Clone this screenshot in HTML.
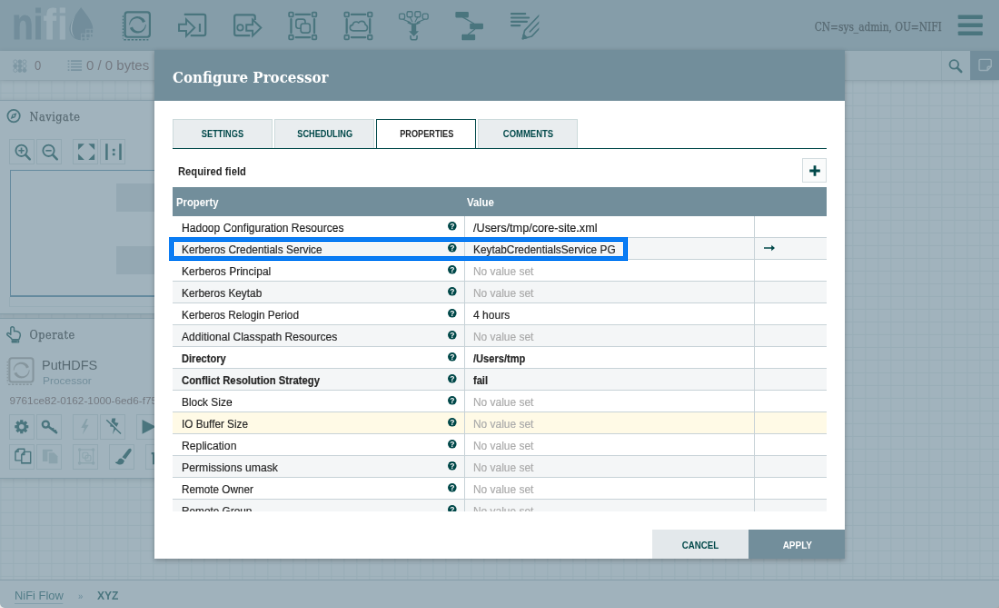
<!DOCTYPE html>
<html lang="en">
<head>
<meta charset="utf-8">
<title>NiFi Flow - Configure Processor</title>
<style>
html,body{margin:0;padding:0;}
body{width:999px;height:608px;overflow:hidden;background:#a1b4bd;font-family:"Liberation Sans",Arial,sans-serif;}
#stage{position:absolute;left:0;top:0;width:1100px;height:670px;transform:scale(0.9084);transform-origin:0 0;overflow:hidden;background:#f9fafb;will-change:transform;}
.abs{position:absolute;}
.slab{font-family:"DejaVu Serif Condensed","DejaVu Serif","Liberation Serif",serif;}
/* canvas */
#canvas{left:0;top:88px;width:1100px;height:550px;background-color:#f9fafb;
 background-image:linear-gradient(to right,#dfe6e9 1px,transparent 1px),linear-gradient(to bottom,#dfe6e9 1px,transparent 1px);
 background-size:14px 14px;background-position:0.4px -0.1px;}
/* header */
#header{left:0;top:0;width:1100px;height:56px;background:#aabbc3;}
#status{left:0;top:56px;width:1100px;height:32px;background:#e3e8eb;box-shadow:0 1px 6px rgba(0,0,0,0.25);color:#775351;font-size:15px;}
#status .t{position:absolute;top:7px;line-height:18px;white-space:nowrap;}
#search{left:1036px;top:0;width:32px;height:32px;border-left:1px solid #c7d2d7;box-sizing:border-box;}
#bull{left:1068px;top:0;width:32px;height:32px;background:#728e9b;}
#user{right:63.5px;top:20.5px;font-size:12.1px;line-height:18px;color:#262626;white-space:nowrap;transform:scaleX(.974);transform-origin:100% 50%;-webkit-text-stroke:0.25px #262626;}
/* panels */
.panel{background:rgba(249,250,251,0.97);border:1px solid #aabbc3;border-left:none;box-shadow:0 1px 6px rgba(0,0,0,0.25);box-sizing:border-box;}
.ptitle{position:absolute;margin-top:1px;-webkit-text-stroke:0.25px #262626;left:32.6px;font-size:12.5px;letter-spacing:0.55px;color:#262626;line-height:18px;}
.btn{position:absolute;width:28px;height:28px;box-sizing:border-box;border:1px solid #cfd9dd;background:#f9fafb;}
.btn svg{position:absolute;left:0;top:0;width:26px;height:26px;}
.btn.dis svg{opacity:.3;}
/* footer */
#crumbs{left:0;top:638px;width:1100px;height:32px;background:#f5f7f9;border-top:1px solid #aabbc3;box-sizing:border-box;font-size:14px;color:#598599;}
#crumbs span{position:absolute;top:8px;line-height:18px;white-space:nowrap;}
/* overlay */
#fade{left:0;top:0;width:1100px;height:670px;background:#728e9b;opacity:.65;}
/* dialog */
#dlg{left:170.4px;top:55.3px;width:760px;height:559.5px;background:#fff;box-shadow:0 2px 5px rgba(0,0,0,0.26);}
#dhead{left:0;top:0;width:760px;height:55.5px;background:#728e9b;}
#dtitle{left:19.5px;top:17.6px;font-size:17.4px;font-weight:bold;color:#fff;line-height:24px;white-space:nowrap;transform:scaleX(.964);transform-origin:0 50%;}
.tab{position:absolute;top:75.7px;height:32px;width:110px;box-sizing:border-box;border:1px solid #ccdadb;border-bottom:none;background:#e9edef;color:#004849;font-size:10.8px;font-weight:bold;text-align:center;line-height:30.2px;}
.tab span,.dbtn span{display:inline-block;transform-origin:50% 50%;}
.tab.sel{background:#fff;border-color:#004849;color:#262626;height:33px;}
#tabline{left:20px;top:107.7px;width:720px;height:1.4px;background:#004849;}
#req{left:25.5px;top:125.8px;font-size:12.3px;font-weight:bold;color:#262626;line-height:16px;transform:scaleX(.913);transform-origin:0 50%;white-space:nowrap;}
#plus{left:712.5px;top:118.7px;width:27.5px;height:27.5px;box-sizing:border-box;border:1px solid #d3dcdf;background:#fafbfb;}
#grid{left:20px;top:150.6px;width:720px;height:357px;overflow:hidden;}
#ghead{left:0;top:0;width:720px;height:32px;background:#728e9b;color:#fff;font-weight:bold;font-size:12.5px;line-height:32px;}
.row{position:absolute;left:0;width:720px;height:24px;box-sizing:border-box;border-bottom:1px solid #c7d2d7;background:#fff;font-size:12.5px;line-height:24px;color:#262626;white-space:nowrap;}
.row span{-webkit-text-stroke:0.18px currentColor;}
.row.alt{background:#f4f6f7;}
.row.hov{background:#fffae6;}
.row.b{font-weight:bold;}
.row .p{position:absolute;left:9.6px;top:0.8px;transform-origin:0 50%;}
.row .v{position:absolute;left:330.5px;top:0.8px;transform-origin:0 50%;}
.row .nv{color:#aaaaaa;font-weight:normal;}
.row .c1{position:absolute;left:320.4px;top:0;width:1px;height:24px;background:#c7d2d7;}
.row .c2{position:absolute;left:639.8px;top:0;width:1px;height:24px;background:#c7d2d7;}
.row .q{position:absolute;left:302.8px;top:6.5px;width:9.6px;height:9.6px;}
.dbtn{position:absolute;top:528px;height:31.5px;width:106px;font-size:11px;font-weight:bold;text-align:center;line-height:34px;}
#annot{left:169px;top:237px;width:459px;height:24px;box-sizing:border-box;border:5px solid #0b7cf3;}
</style>
</head>
<body>
<div id="stage">
  <div id="canvas" class="abs"></div>
  <div id="header" class="abs">
    <div id="user" class="abs slab">CN=sys_admin, OU=NIFI</div>
  </div>
  <div id="status" class="abs">
    <span class="t" style="left:38px;transform:scaleX(.87);transform-origin:0 50%">0</span>
    <span class="t" style="left:95px">0 / 0 bytes</span>
    <div id="search" class="abs"></div>
    <div id="bull" class="abs"></div>
  </div>
  <div id="nav" class="abs panel" style="left:0;top:110px;width:330px;height:235.5px;">
    <div class="ptitle slab" style="top:8px">Navigate</div>
    <div class="btn" style="left:10px;top:42px"></div><div class="btn" style="left:40px;top:42px"></div><div class="btn" style="left:80px;top:42px"></div><div class="btn" style="left:110px;top:42px"></div>
    <div class="abs" style="left:11px;top:76px;width:300px;height:140px;border:1.3px solid #4b83a3;border-bottom-width:2px;box-sizing:border-box;background:#f9fafb;">
      <div class="abs" style="left:116px;top:13.7px;width:180px;height:31.3px;background:#d3dbe0;"></div>
      <div class="abs" style="left:116px;top:82.8px;width:180px;height:31.3px;background:#d3dbe0;"></div>
    </div>
    <div class="abs" style="left:10px;top:216px;width:302px;height:11px;border:1px solid #dde4e7;border-top:none;box-sizing:border-box;"></div>
  </div>
  <div id="op" class="abs panel" style="left:0;top:350px;width:330px;height:177px;">
    <div class="ptitle slab" style="top:8px">Operate</div>
    <div class="abs" style="left:46.4px;top:41px;font-size:15.2px;line-height:20px;color:#262626;white-space:nowrap;transform:scaleX(.955);transform-origin:0 50%">PutHDFS</div>
    <div class="abs" style="left:46.6px;top:59.8px;font-size:11.4px;line-height:16px;color:#728e9b;white-space:nowrap;transform:scaleX(1.05);transform-origin:0 50%">Processor</div>
    <div class="abs" style="left:10.4px;top:81.9px;font-size:11.8px;line-height:16px;color:#775351;white-space:nowrap;">9761ce82-0162-1000-6ed6-f75a30e1c9b4</div>
    <div class="btn" style="left:10px;top:105px"></div><div class="btn" style="left:40px;top:105px"></div><div class="btn" style="left:80px;top:105px"></div><div class="btn" style="left:110px;top:105px"></div><div class="btn" style="left:150px;top:105px"></div>
    <div class="btn" style="left:10px;top:138px"></div><div class="btn" style="left:40px;top:138px"></div><div class="btn" style="left:80px;top:138px"></div><div class="btn" style="left:120px;top:138px"></div><div class="btn" style="left:160px;top:138px"></div>
  </div>
  <div id="crumbs" class="abs">
    <span style="left:15.8px;font-size:12.6px;transform:scaleX(1.025);transform-origin:0 50%;border-bottom:1px solid #a3bcc5;line-height:15.9px;top:9.5px;color:#175c62">NiFi Flow</span>
    <span style="left:85.8px;font-size:11px;transform:scaleX(.864);transform-origin:0 50%;top:8px">&raquo;</span>
    <span style="left:106.8px;font-size:12.6px;font-weight:bold;color:#004849;transform:scaleX(.957);transform-origin:0 50%;top:8.1px">XYZ</span>
  </div>
  <!--ICONS-->
<svg class="abs" style="left:0;top:0;width:1100px;height:670px" viewBox="0 0 999.2 608.6">
<g font-family="Liberation Sans, sans-serif" font-weight="bold" font-size="40" stroke-width="0.76" stroke-linejoin="miter">
<text transform="translate(12.07,39.5) scale(0.87,1.08)" fill="#728e9b" stroke="#728e9b">n</text>
<text transform="translate(33.43,39.5) scale(0.87,1.05)" fill="#728e9b" stroke="#728e9b">i</text>
<text transform="translate(43.7,39.5) scale(0.93,1.05)" fill="#e3e9ec" stroke="#e3e9ec">f</text>
<text transform="translate(57.73,39.5) scale(0.87,1.05)" fill="#e3e9ec" stroke="#e3e9ec">i</text>
</g>
<path d="M81,7.3C78,11.5 69.4,21.5 69.4,28.6C69.4,35.2 74.5,40.2 81.2,40.2C87.9,40.2 93,35.2 93,28.6C93,21.5 84,11.5 81,7.3Z" fill="#728e9b"/>
<path d="M75.6,14.5C72.5,19 70.6,24 70.6,28.6C70.6,32.6 72.3,35.6 74.8,37.6C72.9,35.2 71.9,32.2 71.9,28.6C71.9,24 73.2,19.6 75.6,14.5Z" fill="#dfe6ea"/>
<path d="M85.6,28.8H94V41H80.8V33.4H85.6Z" fill="#aabbc3"/>
<rect x="86.4" y="29.6" width="3.2" height="3.2" fill="#728e9b"/>
<rect x="90.6" y="29.6" width="2.2" height="3.2" fill="#728e9b"/>
<rect x="81.6" y="34.2" width="3.2" height="3.2" fill="#728e9b"/>
<rect x="86.4" y="34.2" width="3.2" height="3.2" fill="#728e9b"/>
<rect x="90.8" y="34.6" width="1.6" height="2" fill="#728e9b"/>
<rect x="82.2" y="38.4" width="2.6" height="2" fill="#728e9b"/>
<rect x="86.8" y="38.4" width="1.8" height="1.6" fill="#728e9b"/>
<g transform="translate(137.4,24.6) scale(1.0)" fill="none" stroke="#004849"><rect x="-12.4" y="-12.4" width="24.8" height="24.8" rx="2.6" stroke-width="2"/><path d="M-13.6,15.1H11" stroke-width="1.3" stroke-dasharray="2.3 1.5"/><path d="M-14.4,-9V14" stroke-width="1.1" stroke-dasharray="1.6 1.6"/><path d="M-8.19,0.49 L-8.17,-0.48 L-8.04,-1.45 L-7.79,-2.40 L-7.43,-3.31 L-6.97,-4.17 L-6.42,-4.97 L-5.77,-5.71 L-5.05,-6.36 L-4.25,-6.92 L-3.39,-7.39 L-2.49,-7.76 L-1.55,-8.02 L-0.58,-8.16 L0.40,-8.20 L1.37,-8.12 L2.33,-7.93 L3.26,-7.62 L4.14,-7.22 L4.98,-6.71 L5.75,-6.11 L6.44,-5.42 L7.05,-4.66 L7.57,-3.83 L7.99,-2.95 L5.11,-1.79 L4.94,-2.39 L4.69,-2.98 L4.36,-3.55 L3.96,-4.08 L3.50,-4.57 L2.97,-5.01 L2.38,-5.39 L1.74,-5.70 L1.06,-5.94 L0.35,-6.10 L-0.39,-6.17 L-1.15,-6.16 L-1.91,-6.05 L-2.67,-5.86 L-3.40,-5.57 L-4.11,-5.19 L-4.78,-4.72 L-5.39,-4.17 L-5.95,-3.54 L-6.43,-2.85 L-6.84,-2.09 L-7.15,-1.27 L-7.37,-0.42 L-7.50,0.47Z" fill="#004849" stroke="none"/><path d="M8.59,-0.09 L8.57,0.88 L8.44,1.85 L8.19,2.80 L7.83,3.71 L7.37,4.57 L6.82,5.37 L6.17,6.11 L5.45,6.76 L4.65,7.32 L3.79,7.79 L2.89,8.16 L1.95,8.42 L0.98,8.56 L0.00,8.60 L-0.97,8.52 L-1.93,8.33 L-2.86,8.02 L-3.74,7.62 L-4.58,7.11 L-5.35,6.51 L-6.04,5.82 L-6.65,5.06 L-7.17,4.23 L-7.59,3.35 L-4.71,2.19 L-4.54,2.79 L-4.29,3.38 L-3.96,3.95 L-3.56,4.48 L-3.10,4.97 L-2.57,5.41 L-1.98,5.79 L-1.34,6.10 L-0.66,6.34 L0.05,6.50 L0.79,6.57 L1.55,6.56 L2.31,6.45 L3.07,6.26 L3.80,5.97 L4.51,5.59 L5.18,5.12 L5.79,4.57 L6.35,3.94 L6.83,3.25 L7.24,2.49 L7.55,1.67 L7.77,0.82 L7.90,-0.07Z" fill="#004849" stroke="none"/></g>
<g fill="none" stroke="#004849" stroke-width="2" stroke-linejoin="miter">
<path d="M184.2,14.5H203.5Q205.5,14.5 205.5,16.5V33.5Q205.5,35.5 203.5,35.5H190.5"/>
<path d="M179,24.4H186.2V19.4L194.6,27.6L186.2,36V30.8H179Z" stroke-width="1.8"/>
<path d="M199.8,23.6V31.8"/>
<path d="M255,20V16.8Q255,14.9 253,14.9H236.5Q234.5,14.9 234.5,16.9V33.5Q234.5,35.5 236.5,35.5H250"/>
<circle cx="240.2" cy="27.6" r="2.9" stroke-width="1.6"/>
<path d="M246.4,24.8H252.6V19.6L261,27.7L252.6,35.8V30.6H246.4Z" stroke-width="1.8"/>
</g>
<g transform="translate(288.2,11.6)" fill="none" stroke="#004849"><rect x="0.8" y="0.8" width="4.2" height="4.2" rx="0.8" stroke-width="1.6"/><rect x="24" y="0.8" width="4.2" height="4.2" rx="0.8" stroke-width="1.6"/><rect x="0.8" y="23.6" width="4.2" height="4.2" rx="0.8" stroke-width="1.6"/><rect x="24" y="23.6" width="4.2" height="4.2" rx="0.8" stroke-width="1.6"/><path d="M7.6,2.9H21.6M7.6,25.7H21.6M2.9,7.6V21.2M26.1,7.6V21.2" stroke-width="2.1" stroke-linecap="round"/>
<rect x="7.8" y="7.6" width="9.2" height="9.2" rx="2.4" stroke-width="1.5"/>
<rect x="12.6" y="12" width="9.2" height="9.2" rx="2.4" stroke-width="1.5" fill="#aabbc3"/>
</g>
<g transform="translate(343.8,11.6)" fill="none" stroke="#004849"><rect x="0.8" y="0.8" width="4.2" height="4.2" rx="0.8" stroke-width="1.6"/><rect x="24" y="0.8" width="4.2" height="4.2" rx="0.8" stroke-width="1.6"/><rect x="0.8" y="23.6" width="4.2" height="4.2" rx="0.8" stroke-width="1.6"/><rect x="24" y="23.6" width="4.2" height="4.2" rx="0.8" stroke-width="1.6"/><path d="M7.6,2.9H21.6M7.6,25.7H21.6M2.9,7.6V21.2M26.1,7.6V21.2" stroke-width="2.1" stroke-linecap="round"/>
<path d="M9.4,19.2C7.2,19.2 6.2,17.7 6.2,16.2C6.2,14.6 7.4,13.4 9,13.3C9.2,11.3 10.8,10.2 12.4,10.2C13.4,10.2 14.2,10.6 14.8,11.2C15.4,10.2 16.6,9.6 17.8,9.6C20,9.6 21.4,11.2 21.5,13.2C22.8,13.6 23.6,14.8 23.6,16.1C23.6,17.8 22.4,19.2 20.6,19.2Z" stroke-width="1.5" stroke-linejoin="round"/>
</g>
<g fill="none" stroke="#004849" stroke-width="1.2">
<rect x="399.3" y="13.8" width="5.4" height="5.4" rx="1.4"/>
<rect x="407" y="11.6" width="5.4" height="5.4" rx="1.4"/>
<rect x="415" y="11.6" width="5.4" height="5.4" rx="1.4"/>
<rect x="422.6" y="13.8" width="5.4" height="5.4" rx="1.4"/>
<path d="M403,19.4L410.6,22.6M410,17.2L412.4,22M417.6,17.2L415,22M424.6,19.4L416.8,22.6" stroke-width="1"/>
<path d="M407.6,22.2Q413.8,26 420,22.2" stroke-width="1.5"/>
<path d="M411.4,24.6H416.2V31H418.8L413.8,36.4L408.8,31H411.4Z" fill="#004849" stroke="none"/>
<path d="M410.6,35.4V37.6Q410.6,39.8 412.8,39.8H414.8Q417,39.8 417,37.6V35.4" stroke-width="1.4"/>
</g>
<g fill="#004849" stroke="#004849" stroke-width="1.2">
<rect x="455.4" y="11.8" width="13.2" height="5.8" rx="1" stroke="none"/>
<rect x="469.8" y="23.4" width="13.4" height="5.8" rx="1" stroke="none"/>
<rect x="461.8" y="34.4" width="13.4" height="5.8" rx="1" stroke="none"/>
<path d="M463,17.4L474,23.6M475,29L468,34.6"/>
</g>
<g fill="none" stroke="#004849" stroke-width="2" stroke-linecap="round">
<path d="M511.4,13.8H525.2M511.4,17.7H528.8M511.4,21.6H526.8M511.4,25.5H519.8"/>
</g>
<defs><clipPath id="cpen"><rect x="520" y="14" width="19" height="27"/></clipPath></defs>
<g clip-path="url(#cpen)" fill="none" stroke="#004849" stroke-width="1.5" stroke-linejoin="round">
<path d="M522.6,38.9L524.6,30.6L541,13.4M522.6,38.9L531.6,36.4L541,26.6M529.4,32.2L541,20.2"/>
<path d="M522.6,38.9L523.7,34.6L526.9,37.7Z" fill="#004849"/>
</g>
<g fill="#004849"><rect x="958" y="14.9" width="24.6" height="4.1" rx="0.8"/><rect x="958" y="23.1" width="24.6" height="4.1" rx="0.8"/><rect x="958" y="31.3" width="24.6" height="4.1" rx="0.8"/></g>
<g stroke="#728e9b" stroke-width="0.8" opacity="0.7">
<circle cx="15.3" cy="61.7" r="1.85" fill="none"/>
<circle cx="19.9" cy="61.7" r="1.85" fill="#728e9b"/>
<circle cx="24.5" cy="61.7" r="1.85" fill="none"/>
<circle cx="15.3" cy="66.0" r="1.85" fill="#728e9b"/>
<circle cx="19.9" cy="66.0" r="1.85" fill="#728e9b"/>
<circle cx="24.5" cy="66.0" r="1.85" fill="none"/>
<circle cx="15.3" cy="70.3" r="1.85" fill="none"/>
<circle cx="19.9" cy="70.3" r="1.85" fill="#728e9b"/>
<circle cx="24.5" cy="70.3" r="1.85" fill="#728e9b"/>
</g>
<g stroke="#728e9b" stroke-width="1.5" opacity="0.8">
<path d="M67.8,61.0H69.4M70.8,61.0H81.8"/>
<path d="M67.8,64.0H69.4M70.8,64.0H81.8"/>
<path d="M67.8,67.0H69.4M70.8,67.0H81.8"/>
<path d="M67.8,70.0H69.4M70.8,70.0H81.8"/>
</g>
<g fill="none" stroke="#004849"><circle cx="954" cy="64.4" r="4.3" stroke-width="1.7"/><path d="M957.2,67.8L961.2,71.8" stroke-width="2.4" stroke-linecap="round"/></g>
<path d="M980.4,59.4H990Q991.2,59.4 991.2,60.6V66.6L987.4,70.4H980.4Q979.2,70.4 979.2,69.2V60.6Q979.2,59.4 980.4,59.4ZM991,66.6H988.6Q987.4,66.6 987.4,67.8V70.2" fill="none" stroke="#e3e8eb" stroke-width="1.3"/>
<g fill="none" stroke="#004849"><circle cx="13.7" cy="115.9" r="6.1" stroke-width="1.6"/><path d="M10.6,119L12.2,114.4L16.8,112.8L15.2,117.4Z" fill="#004849" stroke="none"/><circle cx="13.7" cy="115.9" r="0.9" fill="#f9fafb" stroke="none"/></g>
<g fill="none" stroke="#004849"><circle cx="21.4" cy="150.6" r="5.6" stroke-width="1.7"/><path d="M25.7,155.0L29.799999999999997,159.2" stroke-width="2.3" stroke-linecap="round"/>
<path d="M18.5,150.6H24.299999999999997M21.4,147.7V153.5" stroke-width="1.5"/></g>
<g fill="none" stroke="#004849"><circle cx="48.6" cy="150.6" r="5.6" stroke-width="1.7"/><path d="M52.9,155.0L57.0,159.2" stroke-width="2.3" stroke-linecap="round"/>
<path d="M45.7,150.6H51.5" stroke-width="1.5"/></g>
<path fill="#004849" d="M78.2,143.7h6.2l-6.2,6.2zM94.6,143.7v6.2l-6.2,-6.2zM78.2,159.9v-6.2l6.2,6.2zM94.6,159.9h-6.2l6.2,-6.2z"/>
<g fill="#004849"><rect x="105.5" y="143.7" width="2.3" height="16.2"/><rect x="119.2" y="143.7" width="2.3" height="16.2"/><rect x="112.5" y="148.8" width="2.5" height="2.4"/><rect x="112.5" y="153.1" width="2.5" height="2.4"/></g>
<g transform="translate(21.3,370.0) scale(0.96)" fill="none" stroke="#aaa3a1"><rect x="-12.4" y="-12.4" width="24.8" height="24.8" rx="2.6" stroke-width="2"/><path d="M-13.6,15.1H11" stroke-width="1.3" stroke-dasharray="2.3 1.5"/><path d="M-14.4,-9V14" stroke-width="1.1" stroke-dasharray="1.6 1.6"/><path d="M-8.19,0.49 L-8.17,-0.48 L-8.04,-1.45 L-7.79,-2.40 L-7.43,-3.31 L-6.97,-4.17 L-6.42,-4.97 L-5.77,-5.71 L-5.05,-6.36 L-4.25,-6.92 L-3.39,-7.39 L-2.49,-7.76 L-1.55,-8.02 L-0.58,-8.16 L0.40,-8.20 L1.37,-8.12 L2.33,-7.93 L3.26,-7.62 L4.14,-7.22 L4.98,-6.71 L5.75,-6.11 L6.44,-5.42 L7.05,-4.66 L7.57,-3.83 L7.99,-2.95 L5.11,-1.79 L4.94,-2.39 L4.69,-2.98 L4.36,-3.55 L3.96,-4.08 L3.50,-4.57 L2.97,-5.01 L2.38,-5.39 L1.74,-5.70 L1.06,-5.94 L0.35,-6.10 L-0.39,-6.17 L-1.15,-6.16 L-1.91,-6.05 L-2.67,-5.86 L-3.40,-5.57 L-4.11,-5.19 L-4.78,-4.72 L-5.39,-4.17 L-5.95,-3.54 L-6.43,-2.85 L-6.84,-2.09 L-7.15,-1.27 L-7.37,-0.42 L-7.50,0.47Z" fill="#aaa3a1" stroke="none"/><path d="M8.59,-0.09 L8.57,0.88 L8.44,1.85 L8.19,2.80 L7.83,3.71 L7.37,4.57 L6.82,5.37 L6.17,6.11 L5.45,6.76 L4.65,7.32 L3.79,7.79 L2.89,8.16 L1.95,8.42 L0.98,8.56 L0.00,8.60 L-0.97,8.52 L-1.93,8.33 L-2.86,8.02 L-3.74,7.62 L-4.58,7.11 L-5.35,6.51 L-6.04,5.82 L-6.65,5.06 L-7.17,4.23 L-7.59,3.35 L-4.71,2.19 L-4.54,2.79 L-4.29,3.38 L-3.96,3.95 L-3.56,4.48 L-3.10,4.97 L-2.57,5.41 L-1.98,5.79 L-1.34,6.10 L-0.66,6.34 L0.05,6.50 L0.79,6.57 L1.55,6.56 L2.31,6.45 L3.07,6.26 L3.80,5.97 L4.51,5.59 L5.18,5.12 L5.79,4.57 L6.35,3.94 L6.83,3.25 L7.24,2.49 L7.55,1.67 L7.77,0.82 L7.90,-0.07Z" fill="#aaa3a1" stroke="none"/></g>
<g fill="none" stroke="#004849" stroke-width="1.35" stroke-linejoin="round"><path d="M10.7,333.4V328.5a1.7,1.7 0 0 1 3.4,0V331.3C15.4,331 17.2,331.3 18.7,332C20.1,332.7 20.4,333.7 20.3,335.1C20.2,336.7 19.5,337.8 19,339.4H11.9C11.5,338 9.8,336.9 8.5,336C7.1,335 6.7,334.1 7.3,333.4C8,332.6 9.3,333.1 10.7,334.6Z"/><rect x="12.1" y="340.6" width="6.5" height="1.6" fill="#004849"/></g>
<circle cx="17.4" cy="341.5" r="0.5" fill="#f9fafb"/>
<path d="M26.47,425.19 L28.45,425.24 L28.45,428.16 L26.47,428.21 L26.11,429.08 L27.47,430.51 L25.41,432.57 L23.98,431.21 L23.11,431.57 L23.06,433.55 L20.14,433.55 L20.09,431.57 L19.22,431.21 L17.79,432.57 L15.73,430.51 L17.09,429.08 L16.73,428.21 L14.75,428.16 L14.75,425.24 L16.73,425.19 L17.09,424.32 L15.73,422.89 L17.79,420.83 L19.22,422.19 L20.09,421.83 L20.14,419.85 L23.06,419.85 L23.11,421.83 L23.98,422.19 L25.41,420.83 L27.47,422.89 L26.11,424.32ZM24.1,426.7a2.5,2.5 0 1 0 -5.0,0a2.5,2.5 0 1 0 5.0,0Z" fill="#004849" fill-rule="evenodd"/>
<g fill="none" stroke="#004849"><circle cx="45.7" cy="424.3" r="3.2" stroke-width="2.1"/><path d="M48.3,426.5L56.4,432.5" stroke-width="2.3" stroke-linecap="round"/><path d="M52.2,429.7L53.6,428M54.6,431.6L56,429.9" stroke-width="1.5"/></g>
<path d="M86.24,418.76 L81.09,427.94 L84.45,427.94 L82.44,434.66 L88.71,424.81 L85.35,424.81 L87.81,418.76Z" fill="#004849" opacity="0.3"/>
<path d="M112.1,418.4L115.6,418.4L114.9,422.5L118.6,423L112.6,434.5L114.2,426.9L110,426.4Z" fill="#004849"/>
<path d="M107.5,419.1L121.9,432.9" stroke="#f9fafb" stroke-width="1.3"/>
<path d="M106.5,419.9L120.9,433.7" stroke="#004849" stroke-width="1.3"/>
<path d="M142.2,419.6L156,426.8L142.2,434Z" fill="#004849"/>
<g fill="#f9fafb" stroke="#004849" stroke-width="1.3" stroke-linejoin="round"><path d="M15.4,451.8L18.2,449H24.4V460.4H15.4Z"/><path d="M15.4,451.8H18.2V449" fill="none"/><path d="M21.6,454.6L24.4,451.8H30.6V463.2H21.6Z"/><path d="M21.6,454.6H24.4V451.8" fill="none"/></g>
<g opacity="0.25" fill="#004849"><path d="M42.6,449.4H52.4V451.4H47.6V461.4H42.6Z"/><path d="M48.8,452.6H54L57.6,456.2V463.4H48.8Z"/></g>
<g opacity="0.22" fill="none" stroke="#004849" stroke-width="1.1"><rect x="79.6" y="449.6" width="13.6" height="13.6"/><circle cx="79.6" cy="449.6" r="1.1" fill="#004849"/><circle cx="93.2" cy="449.6" r="1.1" fill="#004849"/><circle cx="79.6" cy="463.2" r="1.1" fill="#004849"/><circle cx="93.2" cy="463.2" r="1.1" fill="#004849"/><rect x="82.6" y="452.6" width="5.4" height="5.4" rx="1.2"/><rect x="85.4" y="455.4" width="5.4" height="5.4" rx="1.2"/></g>
<path d="M130.6,448.6C131.6,449.2 131.6,450.4 131,451.4L125.4,459.2L122.2,457.2L128.2,449.4C128.9,448.5 129.8,448.2 130.6,448.6Z M121.2,458.2L124.2,460.2C124.6,462.6 122.6,464.6 119.8,464.6C117.8,464.6 116,463.6 114.8,462C116.4,462.2 117.6,461.6 118.2,460.2C118.8,458.8 119.8,458.1 121.2,458.2Z" fill="#004849"/>
<path d="M151.4,452.4H166V454.4H164.8V464.4H152.6V454.4H151.4Z" fill="#004849"/>
</svg>
  <!--/ICONS-->
  <div id="fade" class="abs"></div>
  <div id="dlg" class="abs">
    <div id="dhead" class="abs"><div id="dtitle" class="abs slab">Configure Processor</div></div>
    <div class="tab" style="left:20px"><span style="transform:scaleX(.859)">SETTINGS</span></div>
    <div class="tab" style="left:132px"><span style="transform:scaleX(.851)">SCHEDULING</span></div>
    <div class="tab sel" style="left:244px"><span style="transform:scaleX(.849)">PROPERTIES</span></div>
    <div class="tab" style="left:356px"><span style="transform:scaleX(.877)">COMMENTS</span></div>
    <div id="tabline" class="abs"></div>
    <div id="req" class="abs">Required field</div>
    <div id="plus" class="abs"><svg class="abs" style="left:6.7px;top:6.9px;width:12px;height:12px" viewBox="0 0 12 12"><path d="M4.6,0.2h2.8v4.4h4.4v2.8h-4.4v4.4h-2.8v-4.4h-4.4v-2.8h4.4z" fill="#004849"/></svg></div>
    <div id="grid" class="abs">
      <div id="ghead" class="abs"><span class="abs" style="left:3.7px;top:1.5px;transform:scaleX(.905);transform-origin:0 50%">Property</span><span class="abs" style="left:323.7px;top:1.5px;transform:scaleX(.916);transform-origin:0 50%">Value</span></div>
      <div class="row" style="top:32px"><span class="p" style="transform:scaleX(0.966)">Hadoop Configuration Resources</span><svg class="q" viewBox="0 0 12 12"><circle cx="6" cy="6" r="6" fill="#004849"/><text x="6" y="9.6" text-anchor="middle" font-family="Liberation Sans, sans-serif" font-weight="bold" font-size="10.6" fill="#fff">?</text></svg><i class="c1"></i><span class="v" style="transform:scaleX(1.013)">/Users/tmp/core-site.xml</span><i class="c2"></i></div>
      <div class="row alt" style="top:56px"><span class="p" style="transform:scaleX(0.951)">Kerberos Credentials Service</span><svg class="q" viewBox="0 0 12 12"><circle cx="6" cy="6" r="6" fill="#004849"/><text x="6" y="9.6" text-anchor="middle" font-family="Liberation Sans, sans-serif" font-weight="bold" font-size="10.6" fill="#fff">?</text></svg><i class="c1"></i><span class="v" style="transform:scaleX(0.947)">KeytabCredentialsService PG</span><i class="c2"></i><svg class="abs" style="left:651px;top:6px;width:12px;height:10px" viewBox="0 0 12 10"><path d="M0 4.2h8.2V1.8L12 5 8.2 8.2V5.8H0z" fill="#004849"/></svg></div>
      <div class="row" style="top:80px"><span class="p" style="transform:scaleX(0.962)">Kerberos Principal</span><svg class="q" viewBox="0 0 12 12"><circle cx="6" cy="6" r="6" fill="#004849"/><text x="6" y="9.6" text-anchor="middle" font-family="Liberation Sans, sans-serif" font-weight="bold" font-size="10.6" fill="#fff">?</text></svg><i class="c1"></i><span class="v nv" style="transform:scaleX(0.955)">No value set</span><i class="c2"></i></div>
      <div class="row alt" style="top:104px"><span class="p" style="transform:scaleX(0.948)">Kerberos Keytab</span><svg class="q" viewBox="0 0 12 12"><circle cx="6" cy="6" r="6" fill="#004849"/><text x="6" y="9.6" text-anchor="middle" font-family="Liberation Sans, sans-serif" font-weight="bold" font-size="10.6" fill="#fff">?</text></svg><i class="c1"></i><span class="v nv" style="transform:scaleX(0.955)">No value set</span><i class="c2"></i></div>
      <div class="row" style="top:128px"><span class="p" style="transform:scaleX(0.947)">Kerberos Relogin Period</span><svg class="q" viewBox="0 0 12 12"><circle cx="6" cy="6" r="6" fill="#004849"/><text x="6" y="9.6" text-anchor="middle" font-family="Liberation Sans, sans-serif" font-weight="bold" font-size="10.6" fill="#fff">?</text></svg><i class="c1"></i><span class="v" style="transform:scaleX(0.964)">4 hours</span><i class="c2"></i></div>
      <div class="row alt" style="top:152px"><span class="p" style="transform:scaleX(0.967)">Additional Classpath Resources</span><svg class="q" viewBox="0 0 12 12"><circle cx="6" cy="6" r="6" fill="#004849"/><text x="6" y="9.6" text-anchor="middle" font-family="Liberation Sans, sans-serif" font-weight="bold" font-size="10.6" fill="#fff">?</text></svg><i class="c1"></i><span class="v nv" style="transform:scaleX(0.955)">No value set</span><i class="c2"></i></div>
      <div class="row b" style="top:176px"><span class="p" style="transform:scaleX(0.887)">Directory</span><svg class="q" viewBox="0 0 12 12"><circle cx="6" cy="6" r="6" fill="#004849"/><text x="6" y="9.6" text-anchor="middle" font-family="Liberation Sans, sans-serif" font-weight="bold" font-size="10.6" fill="#fff">?</text></svg><i class="c1"></i><span class="v" style="transform:scaleX(0.888)">/Users/tmp</span><i class="c2"></i></div>
      <div class="row alt b" style="top:200px"><span class="p" style="transform:scaleX(0.904)">Conflict Resolution Strategy</span><svg class="q" viewBox="0 0 12 12"><circle cx="6" cy="6" r="6" fill="#004849"/><text x="6" y="9.6" text-anchor="middle" font-family="Liberation Sans, sans-serif" font-weight="bold" font-size="10.6" fill="#fff">?</text></svg><i class="c1"></i><span class="v" style="transform:scaleX(0.888)">fail</span><i class="c2"></i></div>
      <div class="row" style="top:224px"><span class="p" style="transform:scaleX(0.951)">Block Size</span><svg class="q" viewBox="0 0 12 12"><circle cx="6" cy="6" r="6" fill="#004849"/><text x="6" y="9.6" text-anchor="middle" font-family="Liberation Sans, sans-serif" font-weight="bold" font-size="10.6" fill="#fff">?</text></svg><i class="c1"></i><span class="v nv" style="transform:scaleX(0.955)">No value set</span><i class="c2"></i></div>
      <div class="row hov" style="top:248px"><span class="p" style="transform:scaleX(0.941)">IO Buffer Size</span><svg class="q" viewBox="0 0 12 12"><circle cx="6" cy="6" r="6" fill="#004849"/><text x="6" y="9.6" text-anchor="middle" font-family="Liberation Sans, sans-serif" font-weight="bold" font-size="10.6" fill="#fff">?</text></svg><i class="c1"></i><span class="v nv" style="transform:scaleX(0.955)">No value set</span><i class="c2"></i></div>
      <div class="row" style="top:272px"><span class="p" style="transform:scaleX(0.977)">Replication</span><svg class="q" viewBox="0 0 12 12"><circle cx="6" cy="6" r="6" fill="#004849"/><text x="6" y="9.6" text-anchor="middle" font-family="Liberation Sans, sans-serif" font-weight="bold" font-size="10.6" fill="#fff">?</text></svg><i class="c1"></i><span class="v nv" style="transform:scaleX(0.955)">No value set</span><i class="c2"></i></div>
      <div class="row alt" style="top:296px"><span class="p" style="transform:scaleX(0.978)">Permissions umask</span><svg class="q" viewBox="0 0 12 12"><circle cx="6" cy="6" r="6" fill="#004849"/><text x="6" y="9.6" text-anchor="middle" font-family="Liberation Sans, sans-serif" font-weight="bold" font-size="10.6" fill="#fff">?</text></svg><i class="c1"></i><span class="v nv" style="transform:scaleX(0.955)">No value set</span><i class="c2"></i></div>
      <div class="row" style="top:320px"><span class="p" style="transform:scaleX(0.939)">Remote Owner</span><svg class="q" viewBox="0 0 12 12"><circle cx="6" cy="6" r="6" fill="#004849"/><text x="6" y="9.6" text-anchor="middle" font-family="Liberation Sans, sans-serif" font-weight="bold" font-size="10.6" fill="#fff">?</text></svg><i class="c1"></i><span class="v nv" style="transform:scaleX(0.955)">No value set</span><i class="c2"></i></div>
      <div class="row alt" style="top:344px"><span class="p" style="transform:scaleX(0.944)">Remote Group</span><svg class="q" viewBox="0 0 12 12"><circle cx="6" cy="6" r="6" fill="#004849"/><text x="6" y="9.6" text-anchor="middle" font-family="Liberation Sans, sans-serif" font-weight="bold" font-size="10.6" fill="#fff">?</text></svg><i class="c1"></i><span class="v nv" style="transform:scaleX(0.955)">No value set</span><i class="c2"></i></div>
    </div>
    <div class="dbtn" style="left:548px;background:#e3e8eb;color:#004849;"><span style="transform:scaleX(.883)">CANCEL</span></div>
    <div class="dbtn" style="left:654px;background:#728e9b;color:#fff;"><span style="transform:scaleX(.908)">APPLY</span></div>
  </div>
</div>
<div id="annot" class="abs"></div>
<svg class="abs" style="left:0;top:600px;width:999px;height:8px" viewBox="0 0 999 8"><path d="M0,8V3.2A4.8,4.8 0 0 0 4.8,8Z" fill="#e9e9e9"/><path d="M999,8V4.2A3.8,3.8 0 0 1 995.2,8Z" fill="#a8a8a8"/></svg>
</body>
</html>
